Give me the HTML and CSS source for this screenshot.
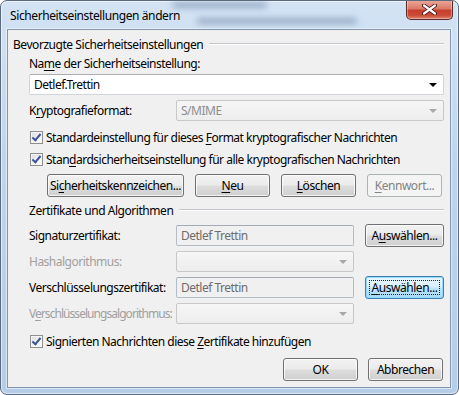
FILE: index.html
```html
<!DOCTYPE html>
<html lang="de">
<head>
    <meta charset="UTF-8">
    <meta name="viewport" content="width=device-width, initial-scale=1.0">
    <title>Sicherheitseinstellungen ändern</title>
    <link rel="stylesheet" href="styles.css">
</head>
<body>
<div class="window">
    <div class="titlebar">
        <span class="glass glass-one"></span>
        <span class="glass glass-two"></span>
        <span class="title">Sicherheitseinstellungen ändern</span>
        <div class="close">
            <svg width="15" height="11" viewBox="0 0 15 11">
                <path d="M2 1.5 L13 9.5 M13 1.5 L2 9.5" stroke="#4a1010" stroke-width="4" stroke-linecap="round"/>
                <path d="M2 1.5 L13 9.5 M13 1.5 L2 9.5" stroke="#ffffff" stroke-width="2.2" stroke-linecap="round"/>
            </svg>
        </div>
    </div>

    <div class="client">
        <div class="group-head">
            <span>Bevorzugte Sicherheitseinstellungen</span>
            <span class="rule"></span>
        </div>

        <div class="indent">
            <div class="label-row">Na<u>m</u>e der Sicherheitseinstellung:</div>
            <div class="combo">
                <span>Detlef.Trettin</span>
                <span class="arrow"></span>
            </div>

            <div class="format-row">
                <span class="field-label">K<u>r</u>yptografieformat:</span>
                <div class="combo disabled">
                    <span>S/MIME</span>
                    <span class="arrow"></span>
                </div>
            </div>

            <div class="check-row first">
                <span class="check"></span>
                <span>Standardeinstellung für dieses <u>F</u>ormat kryptografischer Nachrichten</span>
            </div>
            <div class="check-row">
                <span class="check"></span>
                <span>Stan<u>d</u>ardsicherheitseinstellung für alle kryptografischen Nachrichten</span>
            </div>

            <div class="button-row">
                <button class="btn wide">Si<u>c</u>herheitskennzeichen...</button>
                <button class="btn"><u>N</u>eu</button>
                <button class="btn"><u>L</u>öschen</button>
                <button class="btn disabled"><u>K</u>ennwort...</button>
            </div>

            <div class="group-head sub">
                <span>Zertifikate und Algorithmen</span>
                <span class="rule"></span>
            </div>

            <div class="cert-grid">
                <span class="field-label">Signaturzertifikat:</span>
                <div class="textbox">Detlef Trettin</div>
                <button class="btn pick">A<u>u</u>swählen...</button>

                <span class="field-label disabled-text">Hashalgorithmus:</span>
                <div class="combo disabled"><span></span><span class="arrow"></span></div>
                <span></span>

                <span class="field-label">Verschlüsselungszertifikat:</span>
                <div class="textbox">Detlef Trettin</div>
                <button class="btn pick focus"><u>A</u>uswählen...</button>

                <span class="field-label disabled-text tight">V<u>e</u>rschlüsselungsalgorithmus:</span>
                <div class="combo disabled"><span></span><span class="arrow"></span></div>
                <span></span>
            </div>

            <div class="check-row last">
                <span class="check"></span>
                <span>Signierten Nachrichten diese <u>Z</u>ertifikate hinzufügen</span>
            </div>
        </div>

        <div class="footer">
            <button class="btn">OK</button>
            <button class="btn">Abbrechen</button>
        </div>
    </div>
</div>
</body>
</html>
```

FILE: styles.css
```css
body {
    margin: 0;
    width: 459px;
    height: 395px;
    overflow: hidden;
    background-color: #ffffff;
    font-family: "Noto Sans", sans-serif;
    font-size: 12px;
    color: #000;
}

.window {
    position: relative;
    box-sizing: border-box;
    width: 459px;
    height: 395px;
    border: 1px solid #5a6b80;
    border-radius: 7px;
    background: linear-gradient(180deg, #d3e3f4 0%, #c0d5ec 40%, #b6cde7 100%);
    padding: 0 7px 6px 6px;
    display: flex;
    flex-direction: column;
    box-shadow: inset 0 0 0 1px rgba(255, 255, 255, 0.55);
    overflow: hidden;
}

.titlebar {
    position: relative;
    height: 28px;
    display: flex;
    align-items: flex-start;
    flex-shrink: 0;
}

.title {
    position: relative;
    margin: 6px 0 0 3px;
    letter-spacing: -0.4px;
}

/* blurred window behind the glass */
.glass {
    position: absolute;
    height: 6px;
    border-radius: 3px;
    background-color: #7f95b3;
    filter: blur(3px);
    opacity: 0.7;
}

.glass-one {
    left: 165px;
    width: 95px;
    top: 1px;
}

.glass-two {
    left: 190px;
    width: 160px;
    top: 17px;
}

.close {
    position: relative;
    margin-left: auto;
    margin-right: -2px;
    margin-top: -1px;
    width: 47px;
    height: 20px;
    box-sizing: border-box;
    border: 1px solid #5b2a2a;
    border-top: none;
    border-radius: 0 0 5px 5px;
    background: linear-gradient(180deg, #e9aa9c 0%, #dc7a68 45%, #c8402d 55%, #c94b35 80%, #e0836b 100%);
    box-shadow: inset 0 0 0 1px rgba(255, 255, 255, 0.35);
    display: flex;
    align-items: center;
    justify-content: center;
}

.client {
    flex: 1;
    box-sizing: border-box;
    border: 1px solid #8196ac;
    background-color: #f0f0f0;
    padding: 0 6px 0 5px;
    box-shadow: 0 0 0 1px rgba(255, 255, 255, 0.5);
}

u {
    text-decoration-thickness: 1px;
    text-underline-offset: 2px;
}

.group-head {
    display: flex;
    align-items: center;
    height: 16px;
    margin-top: 6px;
    letter-spacing: -0.45px;
}

.group-head .rule {
    flex: 1;
    margin-left: 6px;
    border-top: 1px solid #c3c7cb;
    border-bottom: 1px solid #ffffff;
}

.group-head.sub {
    margin-top: 5px;
}

.indent {
    padding-left: 16px;
    letter-spacing: -0.5px;
}

.label-row {
    height: 16px;
    line-height: 16px;
    margin-top: 4px;
}

.combo {
    box-sizing: border-box;
    height: 21px;
    margin-top: 2px;
    display: flex;
    align-items: center;
    justify-content: space-between;
    padding: 0 6px 0 4px;
    background-color: #ffffff;
    border: 1px solid #d1d4d9;
    border-top-color: #abadb3;
    border-radius: 2px;
}

.combo .arrow {
    width: 0;
    height: 0;
    border-left: 4px solid transparent;
    border-right: 4px solid transparent;
    border-top: 4px solid #000;
}

.combo.disabled {
    margin-top: 0;
    background: linear-gradient(180deg, #f6f6f6, #ededed);
    border: 1px solid #c8c8c8;
    color: #8d8d8d;
}

.combo.disabled .arrow {
    border-top-color: #a8a8a8;
}

.format-row {
    display: flex;
    align-items: center;
    margin-top: 5px;
    height: 21px;
}

.field-label {
    width: 147px;
    flex-shrink: 0;
    white-space: nowrap;
}

.field-label.tight {
    letter-spacing: -0.95px;
}

.format-row .combo {
    flex: 1;
}

.check-row {
    display: flex;
    align-items: center;
    height: 16px;
    margin-top: 6px;
    padding-left: 1px;
}

.check-row.first {
    margin-top: 8px;
}

.check-row.last {
    margin-top: 8px;
}

.check {
    box-sizing: border-box;
    width: 13px;
    height: 13px;
    margin-right: 3px;
    border: 1px solid #8e8f8f;
    background: linear-gradient(135deg, #d8dbe0 0%, #f4f4f6 60%, #ffffff 100%);
    box-shadow: inset 0 0 0 1px #f6f6f6;
    position: relative;
    flex-shrink: 0;
}

.check::after {
    content: "";
    position: absolute;
    left: 3px;
    top: 0px;
    width: 3px;
    height: 7px;
    border-right: 2px solid #3b5596;
    border-bottom: 2px solid #3b5596;
    transform: rotate(40deg);
}

.button-row {
    display: flex;
    gap: 11px;
    margin-top: 7px;
    padding-left: 18px;
}

.btn {
    position: relative;
    box-sizing: border-box;
    width: 75px;
    height: 23px;
    padding: 0;
    font-family: inherit;
    font-size: 12px;
    letter-spacing: -0.45px;
    color: #000;
    border: 1px solid #707070;
    border-radius: 3px;
    background: linear-gradient(180deg, #f2f2f2 0%, #ebebeb 48%, #dddddd 52%, #cfcfcf 100%);
    box-shadow: inset 0 0 0 1px rgba(255, 255, 255, 0.75);
}

.btn.wide {
    width: 137px;
}

.btn.disabled {
    border-color: #adb2b5;
    background: #f4f4f4;
    color: #838383;
    box-shadow: none;
}

.btn.pick {
    width: 79px;
    justify-self: end;
}

.btn.focus {
    border-color: #3c7fb1;
    background: linear-gradient(180deg, #eaf6fd 0%, #d9f0fc 48%, #bee6fd 52%, #a7d9f5 100%);
    box-shadow: inset 0 0 0 1px #94d9fb;
}

.btn.focus::after {
    content: "";
    position: absolute;
    inset: 3px;
    border: 1px dotted #222;
}

.cert-grid {
    display: grid;
    grid-template-columns: 147px 178px 1fr;
    grid-auto-rows: 23px;
    row-gap: 3px;
    align-items: center;
    margin-top: 6px;
}

.cert-grid .combo {
    margin-top: 0;
}

.textbox {
    box-sizing: border-box;
    height: 21px;
    line-height: 19px;
    padding-left: 4px;
    border: 1px solid #b4bcc6;
    border-top-color: #a4abb4;
    border-radius: 2px;
    background-color: #f0f0f0;
    color: #6d6d6d;
}

.disabled-text {
    color: #a0a0a0;
}

.footer {
    display: flex;
    justify-content: flex-end;
    gap: 10px;
    margin-top: 9px;
    padding-right: 1px;
}
```
